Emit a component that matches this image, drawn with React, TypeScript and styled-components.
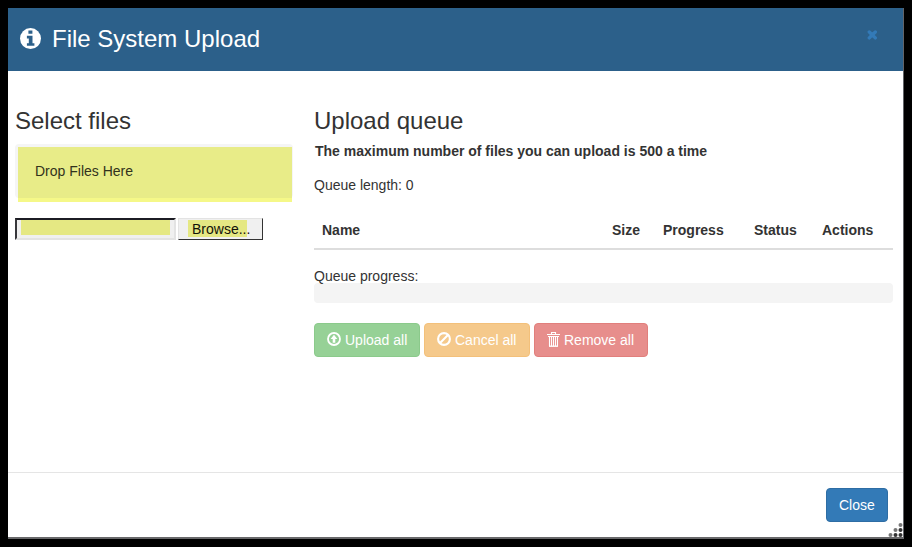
import React from "react";
import styled, { createGlobalStyle } from "styled-components";

const GlobalStyle = createGlobalStyle`
  * { box-sizing: border-box; }
  body {
    margin: 0;
    background: #000;
    color: #333;
    font: 14px/20px "Liberation Sans", Arial, sans-serif;
  }
`;

const Backdrop = styled.div`
  height: 547px;
  padding: 8px;
  background: #000;
  overflow: hidden;
`;

const Dialog = styled.div`
  position: relative;
  display: flex;
  flex-direction: column;
  width: 896px;
  height: 531px;
  background: #fff;
  border-right: 1px solid #626468;
  border-bottom: 2px solid #68686a;
`;

const Header = styled.header`
  display: flex;
  align-items: center;
  height: 63px;
  padding: 0 25px 1px 12px;
  background: #2c608a;
  color: #fff;
`;

const Title = styled.h3`
  flex: 1;
  margin: 0 0 0 10px;
  font-size: 24px;
  line-height: 26px;
  font-weight: 400;
`;

const Dismiss = styled.button`
  display: flex;
  margin: 0 0 9px;
  padding: 0;
  border: 0;
  background: none;
  color: #337ab7;
`;

const Body = styled.main`
  display: grid;
  grid-template-columns: 278px 579px;
  column-gap: 21px;
  height: 402px;
  padding: 37px 0 0 7px;
  border-bottom: 1px solid #e5e5e5;
`;

const Section = styled.section`
  min-width: 0;
`;

const Heading = styled.h3`
  margin: 0;
  font-size: 24px;
  line-height: 26px;
  font-weight: 400;
`;

const DropZone = styled.div`
  position: relative;
  height: 54px;
  margin: 10px 0 20px;
  padding: 17px 20px;
  border-radius: 4px;
  background: #f5f5f5;

  &::before {
    content: "";
    position: absolute;
    left: 3px;
    top: 3px;
    width: 274px;
    height: 55px;
    background: linear-gradient(#e8ec88 51px, #f5f888 51px);
  }
`;

const DropLabel = styled.span`
  position: relative;
  color: #32321c;
`;

const FilePicker = styled.div`
  display: flex;
  gap: 2px;
`;

const FileName = styled.div`
  width: 161px;
  height: 22px;
  padding: 1px 3px 1px 4px;
  border: 2px solid;
  border-color: #1c1c24 #e3e3e3 #e3e3e3 #37373b;
  background: #f0f0f0;
`;

const FileNameFill = styled.div`
  width: 149px;
  height: 15px;
  margin-top: -1px;
  background: #e5e883;
`;

const BrowseButton = styled.button`
  width: 85px;
  height: 22px;
  padding: 0 0 0 9px;
  border: 1px solid;
  border-color: #e3e3e3 #333 #333 #e3e3e3;
  background: linear-gradient(#e5e883, #e5e883) 9px 1px / 59px 17px no-repeat #f0f0f0;
  color: #111108;
  font: 14px/20px "Liberation Sans", Arial, sans-serif;
  text-align: left;
  text-indent: 4px;
`;

const Limit = styled.p`
  margin: 7px 0 14px 1px;
  font-weight: 700;
`;

const QueueLength = styled.p`
  margin: 0 0 16px;
`;

const Table = styled.table`
  width: 579px;
  margin: 0 0 16px;
  border-collapse: collapse;
  table-layout: fixed;
`;

const HeadCell = styled.th<{ $width: number }>`
  width: ${(p) => p.$width}px;
  height: 38px;
  padding: 8px;
  border-bottom: 2px solid #ddd;
  text-align: left;
  font-weight: 700;
`;

const ProgressTrack = styled.div`
  height: 20px;
  margin: -3px 0 20px;
  border-radius: 4px;
  background: #f4f4f4;
`;

const Actions = styled.div`
  display: flex;
  gap: 4px;
`;

const Button = styled.button<{ $fill: string; $edge: string; $width: number }>`
  display: flex;
  align-items: center;
  width: ${(p) => p.$width}px;
  height: 34px;
  padding: 0 12px;
  gap: 4px;
  border: 1px solid ${(p) => p.$edge};
  border-radius: 4px;
  background: ${(p) => p.$fill};
  color: #fff;
  font: 14px/20px "Liberation Sans", Arial, sans-serif;
  white-space: nowrap;

  svg { flex: none; margin-top: -2px; }
`;

const Footer = styled.footer`
  display: flex;
  justify-content: flex-end;
  padding: 15px 15px 0;
`;

const ResizeGrip = styled.svg`
  position: absolute;
  right: 0;
  bottom: 0;
`;

const columns = [
  { label: "Name", width: 290 },
  { label: "Size", width: 51 },
  { label: "Progress", width: 91 },
  { label: "Status", width: 68 },
  { label: "Actions", width: 79 },
];

const InfoIcon = () => (
  <svg width="22" height="22" viewBox="0 0 22 22">
    <circle cx="10.5" cy="10.6" r="10.5" fill="#fff" />
    <path d="M8.4 2.4h4v3.4h-4zM6.9 7.8h5.6v7.4h1.9v2.6H6.9v-2.6h1.9v-4.8H6.9z" fill="#2c608a" />
  </svg>
);

const CrossIcon = () => (
  <svg width="11" height="10" viewBox="0 0 11 10">
    <path d="M2.3 2 8.3 7.9M8.3 2 2.3 7.9" stroke="currentColor" strokeWidth="3.4" strokeLinecap="round" />
  </svg>
);

const UploadIcon = () => (
  <svg width="14" height="14" viewBox="0 0 14 14">
    <circle cx="7" cy="7" r="6" fill="none" stroke="#fff" strokeWidth="1.8" />
    <path d="M7 2.7 10.4 7H8.3v3.7H5.7V7H3.6z" fill="#fff" />
  </svg>
);

const BanIcon = () => (
  <svg width="14" height="14" viewBox="0 0 14 14" fill="none" stroke="#fff" strokeWidth="2.1">
    <circle cx="7" cy="7" r="5.9" />
    <path d="m3.1 10.9 7.8-7.8" />
  </svg>
);

const TrashIcon = () => (
  <svg width="13" height="15" viewBox="0 0 13 15" fill="none" stroke="#fff">
    <path d="M0 2.5h13M4.5 2V.5h4V2" strokeWidth="1.1" />
    <path d="M1 4.5h11" strokeWidth="1" />
    <path d="M2.5 4v10M4.5 5v9M6.5 5v9M8.5 5v9M10.5 4v10" strokeWidth="1.1" />
    <path d="M2 14.2h9" strokeWidth="1.4" />
  </svg>
);

export default function App() {
  return (
    <>
      <GlobalStyle />
      <Backdrop>
        <Dialog role="dialog" aria-label="File System Upload">
          <Header>
            <InfoIcon />
            <Title>File System Upload</Title>
            <Dismiss aria-label="Close dialog"><CrossIcon /></Dismiss>
          </Header>
          <Body>
            <Section>
              <Heading>Select files</Heading>
              <DropZone><DropLabel>Drop Files Here</DropLabel></DropZone>
              <FilePicker>
                <FileName><FileNameFill /></FileName>
                <BrowseButton>Browse...</BrowseButton>
              </FilePicker>
            </Section>
            <Section>
              <Heading>Upload queue</Heading>
              <Limit>The maximum number of files you can upload is 500 a time</Limit>
              <QueueLength>Queue length: 0</QueueLength>
              <Table>
                <thead>
                  <tr>
                    {columns.map((c) => (
                      <HeadCell key={c.label} $width={c.width}>{c.label}</HeadCell>
                    ))}
                  </tr>
                </thead>
              </Table>
              <div>Queue progress:</div>
              <ProgressTrack />
              <Actions>
                <Button $fill="#96d196" $edge="#8bca8b" $width={106}><UploadIcon />Upload all</Button>
                <Button $fill="#f5c98b" $edge="#f3c07a" $width={106}><BanIcon />Cancel all</Button>
                <Button $fill="#e78e8c" $edge="#e17f7c" $width={114}><TrashIcon />Remove all</Button>
              </Actions>
            </Section>
          </Body>
          <Footer>
            <Button $fill="#337ab7" $edge="#2e6da4" $width={62}>Close</Button>
          </Footer>
          <ResizeGrip width="15" height="15" viewBox="0 0 15 15">
            <g fill="#777">
              <circle cx="12.5" cy="3" r="2" />
              <circle cx="7.5" cy="8" r="2" />
              <circle cx="2.5" cy="13" r="2" />
            </g>
            <g fill="#333">
              <circle cx="12.5" cy="8" r="2" />
              <circle cx="7.5" cy="13" r="2" />
              <circle cx="12.5" cy="13" r="2" />
            </g>
          </ResizeGrip>
        </Dialog>
      </Backdrop>
    </>
  );
}
